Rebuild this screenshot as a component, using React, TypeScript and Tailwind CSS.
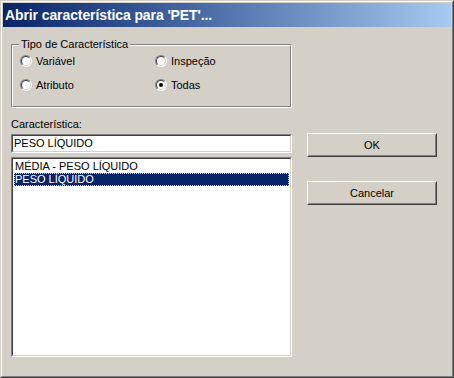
import React from 'react';

const font = { fontFamily: '"Liberation Sans", Arial, sans-serif' };

function Radio({ label, checked }: { label: string; checked?: boolean }) {
  return (
    <div className="flex items-center h-[12px]">
      {/* sunken 12px radio */}
      <span className="relative w-[12px] h-[12px] rounded-full bg-white border border-t-[#808080] border-l-[#808080] border-r-white border-b-white">
        <span className="absolute inset-0 rounded-full border border-t-[#404040] border-l-[#404040] border-r-[#d4d0c8] border-b-[#d4d0c8]" />
        {checked && (
          <span className="absolute left-[3px] top-[3px] w-[4px] h-[4px] rounded-full bg-black" />
        )}
      </span>
      <span className="ml-[4px] text-[11px] leading-[12px] text-black">{label}</span>
    </div>
  );
}

function Sunken({ className, children }: { className?: string; children?: React.ReactNode }) {
  return (
    <div className={`border border-t-[#808080] border-l-[#808080] border-r-white border-b-white ${className ?? ''}`}>
      <div className="h-full bg-white border border-t-[#404040] border-l-[#404040] border-r-[#d4d0c8] border-b-[#d4d0c8]">
        {children}
      </div>
    </div>
  );
}

function Button({ label }: { label: string }) {
  return (
    <div className="w-[130px] h-[24px] border border-t-white border-l-white border-r-[#404040] border-b-[#404040]">
      <div className="h-full bg-[#d4d0c8] border border-t-[#d4d0c8] border-l-[#d4d0c8] border-r-[#808080] border-b-[#808080] flex items-center justify-center text-[11px] text-black">
        {label}
      </div>
    </div>
  );
}

export default function App() {
  return (
    <div style={font} className="w-[454px] h-[378px] bg-[#d4d0c8] border border-t-[#d4d0c8] border-l-[#d4d0c8] border-r-[#404040] border-b-[#404040] select-none">
      <div className="h-full border border-t-white border-l-white border-r-[#808080] border-b-[#808080] p-[1px] flex flex-col">
        {/* Title bar */}
        <div className="h-[24px] bg-gradient-to-r from-[#0a246a] to-[#a6caf0] flex items-center pl-[2px]">
          <span className="text-white font-bold text-[14px] tracking-[-0.1px]">
            Abrir característica para 'PET'...
          </span>
        </div>

        {/* Body */}
        <div className="flex pl-[8px] pt-[11px]">
          {/* Left column */}
          <div className="w-[281px] flex flex-col">
            {/* Group box */}
            <div className="relative mt-[6px] h-[64px] border border-t-[#808080] border-l-[#808080] border-r-white border-b-white">
              <div className="h-full border border-t-white border-l-white border-r-[#808080] border-b-[#808080] pl-[7px] pt-[9px] grid grid-cols-[135px_1fr] gap-y-[12px] content-start">
                <Radio label="Variável" />
                <Radio label="Inspeção" />
                <Radio label="Atributo" />
                <Radio label="Todas" checked />
              </div>
              <span className="absolute left-[7px] -top-[7px] px-[2px] bg-[#d4d0c8] text-[11px] leading-[13px] text-black">
                Tipo de Característica
              </span>
            </div>

            <div className="mt-[10px] text-[11px] leading-[13px] text-black">Característica:</div>

            <Sunken className="mt-[3px] h-[19px]">
              <div className="pl-[1px] text-[11px] leading-[15px] text-black">PESO LÍQUIDO</div>
            </Sunken>

            <Sunken className="mt-[4px] h-[200px]">
              <div className="p-[1px] text-[11px] leading-[13px] text-black">
                <div className="h-[13px] pl-[1px]">MÉDIA - PESO LÍQUIDO</div>
                <div className="h-[13px] pl-[1px] bg-[#0a246a] text-white outline-1 outline-dotted outline-offset-[-1px] outline-[#d4d0c8]">
                  PESO LÍQUIDO
                </div>
              </div>
            </Sunken>
          </div>

          {/* Right column */}
          <div className="ml-[15px] pt-[95px] flex flex-col gap-[24px]">
            <Button label="OK" />
            <Button label="Cancelar" />
          </div>
        </div>
      </div>
    </div>
  );
}
